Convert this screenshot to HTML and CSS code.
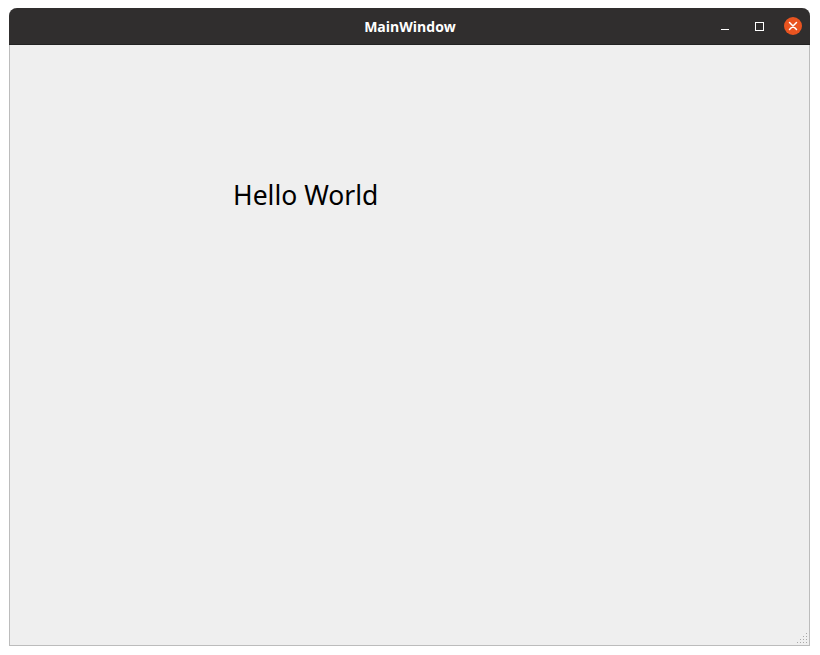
FILE: index.html
```html
<!DOCTYPE html>
<html>
<head>
<meta charset="UTF-8">
<title>MainWindow</title>
<link rel="stylesheet" href="styles.css">
</head>
<body>
    <div class="window">
        <div class="titlebar">
            <span class="title">MainWindow</span>
            <div class="buttons">
                <span class="btn"><span class="minimize"></span></span>
                <span class="btn"><span class="maximize"></span></span>
                <span class="btn"><span class="close">
                    <svg width="18" height="18" viewBox="0 0 18 18">
                        <circle cx="9" cy="9" r="9" fill="#e95420"/>
                        <path d="M5.5 5.5 L12.5 12.5 M12.5 5.5 L5.5 12.5" stroke="#fff" stroke-width="1.5" stroke-linecap="round"/>
                    </svg>
                </span></span>
            </div>
        </div>
        <div class="content">
            <div class="label">Hello World</div>
            <div class="grip"></div>
        </div>
    </div>
</body>
</html>
```

FILE: styles.css
```css
body {
    margin: 0;
    background: #ffffff;
}
.window {
    margin: 8px 0 0 9px;
    width: 801px;
    height: 638px;
    box-sizing: border-box;
    border: 1px solid #bcbcbc;
    border-top: none;
    border-radius: 8px 8px 0 0;
    display: flex;
    flex-direction: column;
    background: #efefef;
}
.titlebar {
    height: 36px;
    margin: 0 -1px;
    background: #302e2e;
    border-radius: 8px 8px 0 0;
    border-bottom: 1px solid #222;
    display: flex;
    align-items: center;
    justify-content: center;
    position: relative;
}
.title {
    font-family: "Open Sans", sans-serif;
    font-weight: bold;
    font-size: 14px;
    color: #ffffff;
    margin-left: 1px;
}
.buttons {
    position: absolute;
    right: 8px;
    top: 0;
    height: 36px;
    display: flex;
    align-items: center;
    gap: 16px;
}
.btn {
    width: 18px;
    height: 18px;
    display: flex;
    align-items: center;
    justify-content: center;
}
.minimize {
    width: 8px;
    height: 1px;
    background: #ffffff;
    margin-top: 6px;
}
.maximize {
    width: 7px;
    height: 7px;
    border: 1px solid #ffffff;
}
.close svg {
    display: block;
}
.content {
    flex: 1;
    position: relative;
    padding: 132px 0 0 223px;
}
.label {
    font-family: "Noto Sans", sans-serif;
    font-size: 26.5px;
    color: #000000;
}
.grip {
    position: absolute;
    right: 2px;
    bottom: 2px;
    width: 11px;
    height: 11px;
    background:
        radial-gradient(circle, #a8a8a8 0.8px, transparent 1px) 0 0 / 3px 3px;
    clip-path: polygon(100% 0, 100% 100%, 0 100%);
}
```
